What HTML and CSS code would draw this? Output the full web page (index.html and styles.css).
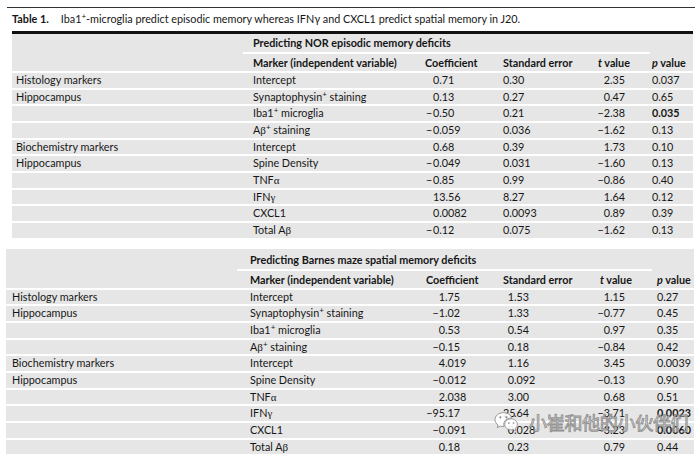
FILE: index.html
```html
<!DOCTYPE html>
<html>
<head>
<meta charset="utf-8">
<link rel="stylesheet" href="styles.css">
</head>
<body>
<div class="page">
  <div class="top-rule"></div>
  <p class="caption"><b class="cap-label">Table 1.</b>Iba1<sup>+</sup>-microglia predict episodic memory whereas IFNγ and CXCL1 predict spatial memory in J20.</p>

  <table class="tbl t1">
    <colgroup>
      <col class="w-a"><col class="w-b"><col class="w-c"><col class="w-d"><col class="w-e"><col class="w-f">
    </colgroup>
    <tr class="span-row"><td></td><td colspan="4" class="spanner">Predicting NOR episodic memory deficits</td><td></td></tr>
    <tr class="head-row"><td></td><td class="c2">Marker (independent variable)</td><td class="c3h">Coefficient</td><td class="c4">Standard error</td><td class="c5h"><i>t</i> value</td><td class="c6"><i>p</i> value</td></tr>
    <tr><td class="c1">Histology markers</td><td class="c2">Intercept</td><td class="c3">0.71</td><td class="c4">0.30</td><td class="c5">2.35</td><td class="c6">0.037</td></tr>
    <tr><td class="c1">Hippocampus</td><td class="c2">Synaptophysin<sup>+</sup> staining</td><td class="c3">0.13</td><td class="c4">0.27</td><td class="c5">0.47</td><td class="c6">0.65</td></tr>
    <tr><td class="c1"></td><td class="c2">Iba1<sup>+</sup> microglia</td><td class="c3"><span class="neg">−</span>0.50</td><td class="c4">0.21</td><td class="c5">−2.38</td><td class="c6 strong">0.035</td></tr>
    <tr><td class="c1"></td><td class="c2">A<span class="gk">β</span><sup>+</sup> staining</td><td class="c3"><span class="neg">−</span>0.059</td><td class="c4">0.036</td><td class="c5">−1.62</td><td class="c6">0.13</td></tr>
    <tr><td class="c1">Biochemistry markers</td><td class="c2">Intercept</td><td class="c3">0.68</td><td class="c4">0.39</td><td class="c5">1.73</td><td class="c6">0.10</td></tr>
    <tr><td class="c1">Hippocampus</td><td class="c2">Spine Density</td><td class="c3"><span class="neg">−</span>0.049</td><td class="c4">0.031</td><td class="c5">−1.60</td><td class="c6">0.13</td></tr>
    <tr><td class="c1"></td><td class="c2">TNF<span class="gk">α</span></td><td class="c3"><span class="neg">−</span>0.85</td><td class="c4">0.99</td><td class="c5">−0.86</td><td class="c6">0.40</td></tr>
    <tr><td class="c1"></td><td class="c2">IFN<span class="gk">γ</span></td><td class="c3">13.56</td><td class="c4">8.27</td><td class="c5">1.64</td><td class="c6">0.12</td></tr>
    <tr><td class="c1"></td><td class="c2">CXCL1</td><td class="c3">0.0082</td><td class="c4">0.0093</td><td class="c5">0.89</td><td class="c6">0.39</td></tr>
    <tr><td class="c1"></td><td class="c2">Total A<span class="gk">β</span></td><td class="c3"><span class="neg">−</span>0.12</td><td class="c4">0.075</td><td class="c5">−1.62</td><td class="c6">0.13</td></tr>
  </table>

  <table class="tbl t2">
    <colgroup>
      <col class="w-a"><col class="w-b2"><col class="w-c"><col class="w-d"><col class="w-e2"><col class="w-f2">
    </colgroup>
    <tr class="span-row"><td></td><td colspan="4" class="spanner">Predicting Barnes maze spatial memory deficits</td><td></td></tr>
    <tr class="head-row"><td></td><td class="c2">Marker (independent variable)</td><td class="c3h">Coefficient</td><td class="c4">Standard error</td><td class="c5h"><i>t</i> value</td><td class="c6"><i>p</i> value</td></tr>
    <tr><td class="c1">Histology markers</td><td class="c2">Intercept</td><td class="c3"><span class="ip">1</span>.75</td><td class="c4"><span class="ip">1</span>.53</td><td class="c5">1.15</td><td class="c6">0.27</td></tr>
    <tr><td class="c1">Hippocampus</td><td class="c2">Synaptophysin<sup>+</sup> staining</td><td class="c3"><span class="ip">−1</span>.02</td><td class="c4"><span class="ip">1</span>.33</td><td class="c5">−0.77</td><td class="c6">0.45</td></tr>
    <tr><td class="c1"></td><td class="c2">Iba1<sup>+</sup> microglia</td><td class="c3"><span class="ip">0</span>.53</td><td class="c4"><span class="ip">0</span>.54</td><td class="c5">0.97</td><td class="c6">0.35</td></tr>
    <tr><td class="c1"></td><td class="c2">A<span class="gk">β</span><sup>+</sup> staining</td><td class="c3"><span class="ip">−0</span>.15</td><td class="c4"><span class="ip">0</span>.18</td><td class="c5">−0.84</td><td class="c6">0.42</td></tr>
    <tr><td class="c1">Biochemistry markers</td><td class="c2">Intercept</td><td class="c3"><span class="ip">4</span>.019</td><td class="c4"><span class="ip">1</span>.16</td><td class="c5">3.45</td><td class="c6">0.0039</td></tr>
    <tr><td class="c1">Hippocampus</td><td class="c2">Spine Density</td><td class="c3"><span class="ip">−0</span>.012</td><td class="c4"><span class="ip">0</span>.092</td><td class="c5">−0.13</td><td class="c6">0.90</td></tr>
    <tr><td class="c1"></td><td class="c2">TNF<span class="gk">α</span></td><td class="c3"><span class="ip">2</span>.038</td><td class="c4"><span class="ip">3</span>.00</td><td class="c5">0.68</td><td class="c6">0.51</td></tr>
    <tr><td class="c1"></td><td class="c2">IFN<span class="gk">γ</span></td><td class="c3"><span class="ip">−95</span>.17</td><td class="c4"><span class="ip">25</span>.64</td><td class="c5">−3.71</td><td class="c6 strong">0.0023</td></tr>
    <tr><td class="c1"></td><td class="c2">CXCL1</td><td class="c3"><span class="ip">−0</span>.091</td><td class="c4"><span class="ip">0</span>.028</td><td class="c5">−3.23</td><td class="c6 strong">0.0060</td></tr>
    <tr><td class="c1"></td><td class="c2">Total A<span class="gk">β</span></td><td class="c3"><span class="ip">0</span>.18</td><td class="c4"><span class="ip">0</span>.23</td><td class="c5">0.79</td><td class="c6">0.44</td></tr>
  </table>
</div>

<div class="watermark">
  <svg class="wm-icon" viewBox="0 0 36 32" width="24" height="22" aria-hidden="true">
    <path d="M14 2 C6.5 2 1.5 7 1.5 12.5 C1.5 15.8 3.3 18.6 6 20.4 L5 24.5 L9.6 22 C11 22.5 12.4 22.8 14 22.8 C14.4 22.8 14.8 22.8 15.2 22.7 C14.8 21.7 14.6 20.7 14.6 19.6 C14.6 14.2 19.6 10 25.8 10 C26.2 10 26.5 10 26.8 10.1 C25.6 5.4 20.4 2 14 2 Z" fill="rgba(255,255,255,0.9)" stroke="#8a8a8a" stroke-width="1.3"/>
    <path d="M25.8 11.2 C20.4 11.2 16 14.9 16 19.5 C16 24.1 20.4 27.8 25.8 27.8 C26.9 27.8 28 27.6 29 27.3 L32.6 29.4 L31.8 25.8 C33.7 24.3 35 22 35 19.5 C35 14.9 30.9 11.2 25.8 11.2 Z" fill="rgba(255,255,255,0.9)" stroke="#8a8a8a" stroke-width="1.3"/>
    <circle cx="9.5" cy="9" r="1.6" fill="#8a8a8a"/>
    <circle cx="18.5" cy="9" r="1.6" fill="#8a8a8a"/>
    <circle cx="22.3" cy="17.5" r="1.3" fill="#8a8a8a"/>
    <circle cx="29.3" cy="17.5" r="1.3" fill="#8a8a8a"/>
  </svg>
  <span class="wm-text">小崔和他的小伙伴们</span>
</div>
</body>
</html>
```

FILE: styles.css
```css
* { box-sizing: border-box; }

html, body {
  margin: 0;
  padding: 0;
  background: #ffffff;
}

body {
  width: 700px;
  height: 457px;
  overflow: hidden;
  position: relative;
  font-family: Lato, "Noto Sans", "DejaVu Sans", sans-serif;
  font-size: 10.8px;
  color: #161616;
}

.page {
  padding-top: 7px;
}

.top-rule {
  margin-left: 7px;
  width: 688px;
  height: 1px;
  background: #333333;
}

.caption {
  margin: 0 0 0 12px;
  padding-top: 2px;
  height: 23px;
  line-height: 17px;
  white-space: nowrap;
}

.cap-label {
  font-weight: 700;
  margin-right: 12px;
}

sup {
  font-size: 8px;
  line-height: 0;
  vertical-align: 4px;
}

.gk {
  font-family: "Liberation Serif", "DejaVu Serif", serif;
  font-size: 11px;
}

.tbl {
  border-collapse: separate;
  border-spacing: 0;
  table-layout: fixed;
  background: #e6e6e6;
}

.t1 {
  margin-left: 12px;
  width: 681px;
  border-top: 3px solid #111111;
}

.t2 {
  margin-left: 6px;
  width: 688px;
  margin-top: 11px;
}

.w-a { width: 231px; }
.w-b { width: 172px; }
.w-b2 { width: 178px; }
.w-c { width: 80px; }
.w-d { width: 95px; }
.w-e { width: 60px; }
.w-e2 { width: 62px; }
.w-f { width: 43px; }
.w-f2 { width: 42px; }

.tbl td {
  padding: 0;
  white-space: nowrap;
  line-height: 14.67px;
  border-top: 2px solid #ffffff;
}

.span-row td {
  border-top: 0;
  height: 20px;
  vertical-align: top;
  padding-top: 2px;
  font-weight: 700;
}

.t2 .span-row td {
  height: 22px;
  padding-top: 4px;
}

.spanner {
  box-shadow: inset 0 -2px 0 #ffffff;
}

.head-row td {
  border-top: 0;
  height: 17px;
  line-height: 17px;
  font-weight: 700;
}

.t1 .c1 { padding-left: 4px; }
.t1 .c2, .t1 .spanner { padding-left: 10px; }
.t1 .c3h { padding-left: 10px; }
.t1 .c3 { padding-left: 18px; }
.t1 .c4 { padding-left: 8px; }
.t1 .c5h { padding-left: 8px; }
.t1 .c5 { text-align: right; padding-right: 25px; }
.t1 .c6 { padding-left: 2px; }

.neg {
  display: inline-block;
  margin-left: -7px;
  width: 7px;
}

.t2 .c1 { padding-left: 6px; }
.t2 .c2, .t2 .spanner { padding-left: 13px; }
.t2 .c3h { padding-left: 11px; }
.t2 .c3 { padding-left: 10px; }
.t2 .c3 .ip { width: 20px; }
.t2 .c4 { padding-left: 8px; }
.t2 .c4 .ip { width: 11px; }
.t2 .c5h { padding-left: 10px; }
.t2 .c5 { text-align: right; padding-right: 27px; }
.t2 .c6 { padding-left: 5px; }

.ip {
  display: inline-block;
  text-align: right;
}

.strong { font-weight: 700; }

.watermark {
  position: absolute;
  left: 494px;
  top: 410px;
  display: flex;
  align-items: center;
  gap: 11px;
}

.wm-icon {
  display: block;
}

.wm-text {
  font-family: "Noto Sans CJK SC", sans-serif;
  font-size: 18px;
  line-height: 24px;
  color: rgba(255, 255, 255, 0.9);
  -webkit-text-stroke: 1px rgba(120, 120, 120, 0.8);
  letter-spacing: -0.3px;
}
```
